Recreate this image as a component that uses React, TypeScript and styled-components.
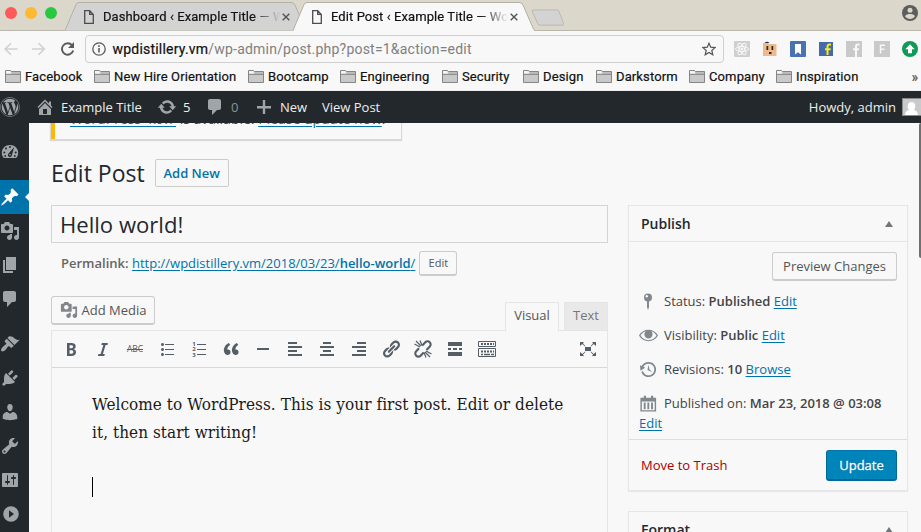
import React from "react";
import styled, { createGlobalStyle, css } from "styled-components";
import { FaWordpress } from "react-icons/fa";

const UI = `"Open Sans", "Noto Sans", sans-serif`;
const CHROME = `Roboto, "Liberation Sans", sans-serif`;
const BG = "#f8f8f8";
const INK = "#23282d";
const BLUE = "#0073aa";
const MUTED = "#a0a5aa";

const Global = createGlobalStyle`
  * { box-sizing: border-box; }
  html, body { margin: 0; padding: 0; overflow: hidden; background: ${BG}; }
  body { font-family: ${UI}; font-size: 13px; color: #444; }
  svg { display: block; flex: none; }
`;

/* ---------- icon glyph paths, 20 x 20 grid ---------- */
const P = {
  home: "M16 8.5l1.53 1.53-1.06 1.06L10 4.6l-6.47 6.49-1.06-1.06L10 2.5l4 4v-2h2v4zm-6-2.46l6 5.99V18H4v-5.97zM12 17v-5H8v5h4z",
  update: "M10.2 3.28c3.53 0 6.43 2.61 6.92 6h2.08l-3.5 4-3.5-4h2.32c-.45-1.97-2.21-3.45-4.32-3.45-1.45 0-2.73.71-3.54 1.78L4.95 5.66C6.23 4.2 8.11 3.28 10.2 3.28zm-.4 13.44c-3.52 0-6.43-2.61-6.92-6H.8l3.5-4c1.17 1.33 2.33 2.67 3.5 4H5.48c.45 1.97 2.21 3.45 4.32 3.45 1.45 0 2.73-.71 3.54-1.78l1.71 1.95c-1.28 1.46-3.15 2.38-5.25 2.38z",
  comment: "M5 2h9c1.1 0 2 .9 2 2v7c0 1.1-.9 2-2 2h-2l-5 5v-5H5c-1.1 0-2-.9-2-2V4c0-1.1.9-2 2-2z",
  plus: "M17 9v2.4h-5.8V17H8.8v-5.6H3V9h5.8V3h2.4v6H17z",
  pin: "M10.44 3.02l1.82-1.82 6.36 6.35-1.83 1.82c-1.05-.68-2.48-.57-3.41.36l-.75.75c-.92.93-1.04 2.35-.35 3.41l-1.83 1.82-2.41-2.41-2.8 2.79c-.42.42-3.38 2.71-3.8 2.29s1.86-3.39 2.28-3.81l2.79-2.79L4.1 9.36l1.83-1.82c1.05.69 2.48.57 3.4-.36l.75-.75c.93-.92 1.05-2.35.36-3.41z",
  media: "M13 11V4c0-.55-.45-1-1-1h-1.67L9 1H5L3.67 3H2c-.55 0-1 .45-1 1v7c0 .55.45 1 1 1h10c.55 0 1-.45 1-1zM7 4.5c1.38 0 2.5 1.12 2.5 2.5S8.38 9.5 7 9.5 4.5 8.38 4.5 7 5.62 4.5 7 4.5zM14 6h5v10.5c0 1.38-1.12 2.5-2.5 2.5S14 17.88 14 16.5s1.12-2.5 2.5-2.5c.17 0 .34.02.5.05V9h-3V6zm-4 8.05V13h2v3.5c0 1.38-1.12 2.5-2.5 2.5S7 17.88 7 16.5 8.12 14 9.5 14c.17 0 .34.02.5.05z",
  page: "M6 15V2h10v13H6zm-1 1h8v2H3V5h2v11z",
  brush: "M14.48 11.06L7.41 3.99l1.5-1.5c.5-.56 2.3-.47 3.51.32 1.21.8 1.43 1.28 2.91 2.1 1.18.64 2.45 1.26 4.45.85zm-.71.71L6.7 4.7 4.93 6.47c-.39.39-.39 1.02 0 1.41l1.06 1.06c.39.39.39 1.03 0 1.42-.6.6-1.43 1.11-2.21 1.69-.35.26-.7.53-1.01.84C1.43 14.23.4 16.08 1.4 17.07c.99 1 2.84-.03 4.18-1.36.31-.31.58-.66.85-1.02.57-.78 1.08-1.61 1.69-2.21.39-.39 1.02-.39 1.41 0l1.06 1.06c.39.39 1.02.39 1.41 0z",
  plug: "M13.11 4.36L9.87 7.6 8 5.73l3.24-3.24c.35-.34 1.05-.2 1.56.32.52.51.66 1.21.31 1.55zm-8 1.77l.91-1.12 9.01 9.01-1.19.84c-.71.71-2.63 1.16-3.82 1.16H6.14L4.9 17.26c-.59.59-1.54.59-2.12 0-.59-.58-.59-1.53 0-2.12l1.24-1.24v-3.88c0-1.13.4-3.19 1.09-3.89zm7.26 3.97l3.24-3.24c.34-.35 1.04-.21 1.55.31.52.51.66 1.21.31 1.55l-3.24 3.25z",
  user: "M10 9.25c-2.27 0-2.73-3.44-2.73-3.44C7 4.02 7.82 2 9.97 2c2.16 0 2.98 2.02 2.71 3.81 0 0-.41 3.44-2.68 3.44zm0 2.57L12.72 10c2.39 0 4.52 2.33 4.52 4.53v2.49s-3.65 1.13-7.24 1.13c-3.65 0-7.24-1.13-7.24-1.13v-2.49c0-2.25 1.94-4.48 4.47-4.48z",
  wrench: "M16.68 9.77c-1.34 1.34-3.3 1.67-4.95.99l-5.41 6.52c-.99.99-2.59.99-3.58 0s-.99-2.59 0-3.57l6.52-5.42c-.68-1.65-.35-3.61.99-4.95 1.28-1.28 3.12-1.62 4.72-1.06l-2.89 2.89 2.82 2.82 2.86-2.87c.53 1.58.18 3.39-1.08 4.65zM3.81 16.21c.4.39 1.04.39 1.43 0 .4-.4.4-1.04 0-1.43-.39-.4-1.03-.4-1.43 0-.39.39-.39 1.03 0 1.43z",
  settings: "M18 16V4c0-.55-.45-1-1-1H3c-.55 0-1 .45-1 1v12c0 .55.45 1 1 1h14c.55 0 1-.45 1-1zM8 11h1c.55 0 1 .45 1 1s-.45 1-1 1H8v1.5c0 .28-.22.5-.5.5s-.5-.22-.5-.5V13H6c-.55 0-1-.45-1-1s.45-1 1-1h1V5.5c0-.28.22-.5.5-.5s.5.22.5.5V11zm5-2h-1c-.55 0-1-.45-1-1s.45-1 1-1h1V5.5c0-.28.22-.5.5-.5s.5.22.5.5V7h1c.55 0 1 .45 1 1s-.45 1-1 1h-1v5.5c0 .28-.22.5-.5.5s-.5-.22-.5-.5V9z",
  collapse: "M11 2.200a7.800 7.800 0 1 0 0 15.600a7.800 7.800 0 1 0 0-15.600zM9 6.200l5 3.800-5 3.800z",
  bold: "M6 4v13h4.54c1.37 0 2.46-.33 3.26-1 .8-.66 1.2-1.58 1.2-2.77 0-.84-.17-1.51-.51-2.01s-.9-.85-1.67-1.03v-.09c.57-.1 1.02-.4 1.36-.9s.51-1.13.51-1.91c0-1.14-.39-1.98-1.17-2.5C12.75 4.26 11.5 4 9.78 4H6zm2.57 5.15V6.26h1.36c.73 0 1.27.11 1.61.32.34.22.51.58.51 1.07 0 .54-.16.92-.47 1.15s-.82.35-1.51.35h-1.5zm0 2.19h1.6c1.44 0 2.16.53 2.16 1.61 0 .6-.17 1.05-.51 1.34s-.86.43-1.57.43H8.57v-3.38z",
  italic: "M14.78 4h-5.900l-.55 2h2l-2.700 9H5.500l-.6 2h6.400l.55-2H9.900l2.700-9h2z",
  ul: "M5.5 7C4.67 7 4 6.33 4 5.5 4 4.68 4.67 4 5.5 4 6.32 4 7 4.68 7 5.5 7 6.33 6.32 7 5.5 7zM8 5h9v1H8V5zm-2.500 7c-.83 0-1.500-.67-1.500-1.500C4 9.680 4.670 9 5.500 9c.82 0 1.500.68 1.500 1.500 0 .83-.68 1.500-1.500 1.500zM8 10h9v1H8v-1zm-2.500 7c-.83 0-1.500-.67-1.500-1.500 0-.82.67-1.500 1.500-1.500.82 0 1.500.68 1.500 1.500 0 .83-.68 1.500-1.500 1.500zM8 15h9v1H8v-1z",
  quote: "M9.49 13.22c0-.74-.2-1.38-.61-1.9-.62-.78-1.83-.88-2.53-.72-.29-1.65 1.11-3.75 2.92-4.65L7.88 4c-2.73 1.3-5.42 4.28-4.96 8.05C3.21 14.43 4.59 16 6.54 16c.85 0 1.56-.25 2.12-.75s.83-1.18.83-2.03zm8.05 0c0-.74-.2-1.38-.61-1.9-.63-.78-1.83-.88-2.53-.72-.29-1.65 1.11-3.75 2.92-4.65L15.93 4c-2.73 1.3-5.41 4.28-4.95 8.05.29 2.38 1.66 3.95 3.61 3.95.85 0 1.56-.25 2.12-.75s.83-1.18.83-2.03z",
  hr: "M4 9h12v2H4z",
  left: "M3 3h9v2H3zM3 7h14v2H3zM3 11h9v2H3zM3 15h14v2H3z",
  center: "M6 3h8v2H6zM3 7h14v2H3zM6 11h8v2H6zM3 15h14v2H3z",
  right: "M8 3h9v2H8zM3 7h14v2H3zM8 11h9v2H8zM3 15h14v2H3z",
  link: "M17.74 2.76c1.68 1.69 1.68 4.41 0 6.1l-1.53 1.52c-1.12 1.12-2.7 1.47-4.14 1.09l2.62-2.61.76-.77.76-.76c.84-.84.84-2.2 0-3.04-.84-.85-2.2-.85-3.04 0l-.77.76-3.38 3.38c-.37-1.44-.02-3.02 1.1-4.14l1.52-1.53c1.69-1.68 4.42-1.68 6.1 0zM8.59 13.43l5.34-5.34c.42-.42.42-1.1 0-1.52-.44-.43-1.13-.39-1.53 0l-5.33 5.34c-.42.42-.42 1.1 0 1.52.44.43 1.13.39 1.52 0zm-.76 2.29l4.14-4.15c.38 1.44.03 3.02-1.09 4.14l-1.52 1.53c-1.69 1.68-4.41 1.68-6.1 0-1.68-1.68-1.68-4.42 0-6.1l1.53-1.52c1.12-1.12 2.7-1.47 4.14-1.1l-4.14 4.15c-.85.84-.85 2.2 0 3.05.84.84 2.2.84 3.04 0z",
  more: "M3 3h14v4H3zM3 9h3v2H3zM8 9h4v2H8zM14 9h3v2h-3zM3 13h14v4H3z",
  fullscreen: "M7 8h6v4H7zM2 3h4L4.900 4.300 7.400 7 7 7.400 4.300 4.900 2 7zM18 3h-4l1.100 1.300L12.600 7l.4.4 2.700-2.500L18 7zM2 17h4l-1.100-1.300L7.400 13l-.4-.4-2.700 2.500L2 13zM18 17h-4l1.100-1.300-2.500-2.700.4-.4 2.700 2.500L18 13z",
  eye: "M19.7 9.4C17.7 6 14 3.9 10 3.9S2.3 6 .3 9.4L0 10l.3.6c2 3.4 5.7 5.5 9.7 5.5s7.7-2.1 9.7-5.5l.3-.6-.3-.6zM10 14.9c-3.3 0-6.6-1.8-8.4-4.9C3 7.6 5 6.2 7 5.6 6.2 6.5 5.7 7.6 5.7 9c0 2.3 1.9 4.2 4.300 4.200s4.300-1.900 4.300-4.200c0-1.400-.5-2.500-1.300-3.400 2 .6 4 2 5.400 4.400-1.800 3.100-5.100 4.900-8.400 4.900z",
  backup: "M13.65 2.88c3.93 2.01 5.48 6.84 3.47 10.77s-6.83 5.48-10.77 3.47c-1.87-.96-3.2-2.56-3.86-4.4l1.64-1.03c.45 1.57 1.52 2.95 3.08 3.76 3.01 1.54 6.69.35 8.23-2.66 1.55-3.01.36-6.69-2.65-8.24C9.78 3.01 6.1 4.2 4.56 7.21l1.88.97-4.95 3.08-.39-5.82 1.78.91C4.9 2.4 9.75.89 13.65 2.88zm-4.36 7.83C9.11 10.53 9 10.28 9 10c0-.07.03-.12.04-.19h-.01L10 5l.97 4.81L14 13l-4.5-2.12.02-.02c-.08-.04-.16-.09-.23-.15z",
  calendar: "M15 4h3v14.500H1.500V4H5V3c0-.83.67-1.500 1.200-1.500S7.400 2.170 7.400 3v1h5.200V3c0-.83.67-1.500 1.200-1.500S15 2.170 15 3zM16.500 17V8H3v9zM7 9v7H5V9zM10.800 9v7h-2V9zM14.700 9v7h-2V9z",
};

const Glyph = ({ d, size = 20, color = MUTED }: { d: string; size?: number; color?: string }) => (
  <svg width={size} height={size} viewBox="0 0 20 20" fill={color} fillRule="evenodd">
    <path d={d} />
  </svg>
);

/* ---------- browser frame ---------- */
const Window = styled.div`
  width: 921px;
  height: 532px;
  overflow: hidden;
  display: flex;
  flex-direction: column;
  background: ${BG};
`;
const TabStrip = styled.div`
  height: 31px;
  flex: none;
  display: flex;
  align-items: flex-end;
  padding-right: 3px;
  background: #dbd7ca;
  box-shadow: inset 0 -1px #b9b6ab;
  font-family: ${CHROME};
`;
const Lights = styled.div`
  display: flex;
  gap: 8px;
  width: 65px;
  height: 31px;
  padding: 7px 0 0 5px;
`;
const Light = styled.i<{ $c: string }>`
  width: 12px;
  height: 12px;
  border-radius: 50%;
  background: ${(p) => p.$c};
`;
const Tab = styled.div`
  position: relative;
  width: 242px;
  height: 29px;
  margin-right: -14px;
  display: flex;
  align-items: center;
  padding: 0 12px 0 19px;
`;
const TabShape = styled.svg`
  position: absolute;
  inset: 0;
`;
const TabIcon = styled.svg`
  position: relative;
`;
const TabTitle = styled.span`
  position: relative;
  margin-left: 9px;
  width: 179px;
  overflow: hidden;
  white-space: nowrap;
  font-size: 13px;
  letter-spacing: 0.08px;
  color: #111;
  -webkit-text-stroke: 0.2px;
  mask-image: linear-gradient(90deg, #000 150px, transparent 177px);
`;
const NewTab = styled.svg`
  align-self: flex-start;
  margin: 9px 0 0 10px;
`;
const Profile = styled.svg`
  margin: 5px 0 0 auto;
  align-self: flex-start;
`;
const Toolbar = styled.div`
  height: 36px;
  flex: none;
  display: flex;
  align-items: center;
  padding: 0 3px 0 4px;
  font-family: ${CHROME};
`;
const NavButtons = styled.div`
  display: flex;
  width: 81px;
  gap: 13px;
`;
const Omnibox = styled.div`
  width: 639px;
  height: 28px;
  display: flex;
  align-items: center;
  padding: 0 7px 0 6px;
  border: 1px solid #cfcfcf;
  border-radius: 4px;
`;
const Url = styled.span`
  flex: 1;
  margin-left: 6.5px;
  font-size: 14px;
  letter-spacing: 0.21px;
  color: #808080;
  b {
    font-weight: 400;
    color: #111;
    -webkit-text-stroke: 0.2px;
  }
`;
const Extensions = styled.div`
  display: flex;
  align-items: center;
  justify-content: space-between;
  width: 184px;
  margin-left: auto;
`;
const Bookmarks = styled.div`
  height: 24px;
  flex: none;
  display: flex;
  align-items: center;
  padding: 0 3px 4px 5px;
  border-bottom: 1px solid #ececec;
  font-family: ${CHROME};
  font-size: 13px;
  color: #111;
  -webkit-text-stroke: 0.2px;
`;
const Bookmark = styled.div<{ $w: number }>`
  width: ${(p) => p.$w}px;
  flex: none;
  display: flex;
  align-items: center;
  gap: 4px;
  letter-spacing: 0.12px;
  white-space: nowrap;
`;
const Chevrons = styled.span`
  margin-left: auto;
  font-size: 14px;
  color: #555;
`;

const FileIcon = () => (
  <TabIcon width="10" height="14" viewBox="0 0 10 14" fill="none" stroke="#4c4c4c" strokeWidth="1.3">
    <path d="M.7.7h5l3.600 3.700v8.900H.7zM5.700.7v3.700h3.600" />
  </TabIcon>
);
const CloseIcon = () => (
  <TabIcon width="8" height="8" viewBox="0 0 8 8" stroke="#555" strokeWidth="1.4">
    <path d="M.7.7l6.600 6.600M7.300.7L.7 7.300" />
  </TabIcon>
);
const FolderIcon = () => (
  <svg width="16" height="13" viewBox="0 0 16 13">
    <path d="M.5 12.500V.5h5l1 1h9v11z" fill="#c9c9c9" stroke="#858585" />
    <path d="M1 4.500h14" stroke="#8f8f8f" />
    <path d="M1 3.500v-2.500h4l1.500 2.500z" fill="#f4f4f4" />
    <path d="M7 2.500h8v1.500H6z" fill="#b4b4b4" />
  </svg>
);

const bookmarks: [string, number][] = [
  ["Facebook", 89], ["New Hire Orientation", 154], ["Bootcamp", 92], ["Engineering", 102], ["Security", 81],
  ["Design", 73], ["Darkstorm", 93], ["Company", 87], ["Inspiration", 90],
];

const BrowserTab = ({ title, active }: { title: string; active?: boolean }) => (
  <Tab>
    <TabShape width="242" height="29" viewBox="0 0 242 29">
      <path
        d="M0 28.500L10.800 3Q12 .5 14 .5H226Q229 .5 230 3L240 26Q241 28.500 242 28.500"
        fill={active ? BG : "#d3d3d3"}
        stroke="#b3b0a8"
      />
      {active && <path d="M1 28.500h240" stroke={BG} />}
    </TabShape>
    <FileIcon />
    <TabTitle>{title}</TabTitle>
    <CloseIcon />
  </Tab>
);

const BrowserChrome = () => (
  <>
    <TabStrip>
      <Lights>
        <Light $c="#fc5b57" />
        <Light $c="#fdb92f" />
        <Light $c="#28c840" />
      </Lights>
      <BrowserTab title="Dashboard ‹ Example Title — WordPress" />
      <BrowserTab title="Edit Post ‹ Example Title — WordPress" active />
      <NewTab width="34" height="18" viewBox="0 0 34 18">
        <path d="M2 1h24q1.500 0 2 1.500l4.500 12q.6 1.700-1 1.700H9q-1.500 0-2.200-1.500L1.500 3Q.7 1 2 1z" fill="#d3d3d3" stroke="#bbb8ae" />
      </NewTab>
      <Profile width="16" height="16" viewBox="0 0 16 16">
        <circle cx="8" cy="8" r="8" fill="#5d5d5d" />
        <circle cx="8" cy="5.300" r="2.500" fill="#dbd7ca" />
        <path d="M3 11.300C4 9.300 6 9 8 9s4 .3 5 2.300a6 6 0 0 1-10 0z" fill="#dbd7ca" />
      </Profile>
    </TabStrip>
    <Toolbar>
      <NavButtons>
        <svg width="14" height="14" viewBox="0 0 14 14" fill="none" stroke="#d0d0d0" strokeWidth="1.600">
          <path d="M13.500 7H1.500M7 1.200L1.200 7 7 12.800" />
        </svg>
        <svg width="16" height="14" viewBox="0 0 16 14" fill="none" stroke="#d0d0d0" strokeWidth="1.600">
          <path d="M1 7h12M7.500 1.200L13.300 7l-5.800 5.800" />
        </svg>
        <svg width="16" height="14" viewBox="0 0 16 14" fill="none" stroke="#5a5a5a" strokeWidth="1.900">
          <path d="M13.200 8.500A5.700 5.700 0 1 1 12 3.200" />
          <path d="M14 0v6H8z" fill="#5a5a5a" stroke="none" />
        </svg>
      </NavButtons>
      <Omnibox>
        <svg width="14" height="14" viewBox="0 0 14 14">
          <circle cx="7" cy="7" r="6.200" fill="none" stroke="#5a5a5a" strokeWidth="1.300" />
          <path d="M6.200 6h1.600v4.500H6.200zM6.200 3.300h1.600v1.600H6.200z" fill="#5a5a5a" />
        </svg>
        <Url>
          <b>wpdistillery.vm</b>/wp-admin/post.php?post=1&amp;action=edit
        </Url>
        <svg width="14" height="14" viewBox="0 0 14 14" fill="none" stroke="#555" strokeWidth="1.200">
          <path d="M7 1.200l1.700 4 4.400.4-3.300 2.900 1 4.300L7 10.500l-3.800 2.300 1-4.300L.9 5.600l4.400-.4z" />
        </svg>
      </Omnibox>
      <Extensions>
        <svg width="16" height="16" viewBox="0 0 16 16">
          <rect width="16" height="16" rx="1" fill="#cfcfcf" />
          <g fill="none" stroke="#f8f8f8">
            <ellipse cx="8" cy="8" rx="6.500" ry="2.500" />
            <ellipse cx="8" cy="8" rx="6.500" ry="2.500" transform="rotate(60 8 8)" />
            <ellipse cx="8" cy="8" rx="6.500" ry="2.500" transform="rotate(120 8 8)" />
          </g>
          <circle cx="8" cy="8" r="1.300" fill="#f8f8f8" />
        </svg>
        <svg width="16" height="16" viewBox="0 0 16 16">
          <path d="M1 2h5l1 1h7.500v12H1z" fill="#edbb8b" />
          <path d="M2.500 2q2.500-2.500 5 0z" fill="#1d3057" />
          <path d="M4.500 5h1.700v4H4.500zM9.500 5h1.700v4H9.500zM7 11h2.500v2H7z" fill="#33261d" />
        </svg>
        <svg width="16" height="16" viewBox="0 0 16 16">
          <rect width="16" height="16" rx="1" fill="#4b72b0" />
          <path d="M5 3h6v10.500l-3-2.300-3 2.300z" fill="#fff" />
        </svg>
        <svg width="16" height="16" viewBox="0 0 16 16">
          <rect x="1" y="1" width="14" height="14" fill="#4569ad" />
          <path d="M13 3.500h-1.300c-1.700 0-2.200.9-2.200 2.200V14M7 8.200h5.700" fill="none" stroke="#f7ec20" strokeWidth="2" />
        </svg>
        <svg width="16" height="16" viewBox="0 0 16 16">
          <rect width="16" height="16" fill="#c9c9c9" />
          <path d="M13.500 3.500h-1.300C10.500 3.500 10 4.400 10 5.700V16M7 8.300h6" fill="none" stroke="#f8f8f8" strokeWidth="2.100" />
        </svg>
        <svg width="16" height="16" viewBox="0 0 16 16">
          <rect width="16" height="16" fill="#c9c9c9" />
          <path d="M11 4.200H6.500V12.500M6.500 8.200h4" fill="none" stroke="#f8f8f8" strokeWidth="1.500" />
        </svg>
        <svg width="16" height="16" viewBox="0 0 16 16">
          <circle cx="8" cy="8" r="8" fill="#0f9a58" />
          <path d="M8 3.300l4.700 4.900H10v4H6v-4H3.300z" fill="#fff" />
        </svg>
      </Extensions>
    </Toolbar>
    <Bookmarks>
      {bookmarks.map(([label, w]) => (
        <Bookmark key={label} $w={w}>
          <FolderIcon />
          {label}
        </Bookmark>
      ))}
      <Chevrons>»</Chevrons>
    </Bookmarks>
  </>
);

/* ---------- admin bar and menu ---------- */
const AdminBar = styled.div`
  height: 32px;
  flex: none;
  position: relative;
  z-index: 2;
  display: flex;
  align-items: center;
  background: ${INK};
  color: #eee;
  font-size: 13px;
`;
const BarItem = styled.div<{ $w?: number; $dim?: boolean }>`
  display: flex;
  align-items: center;
  flex: none;
  ${(p) => p.$w && css`width: ${p.$w}px;`}
  gap: 6px;
  ${(p) => p.$dim && css`color: #8d9196;`}
`;
const Howdy = styled.div`
  margin-left: auto;
  display: flex;
  align-items: center;
  gap: 6px;
`;
const Body = styled.div`
  flex: 1;
  min-height: 0;
  display: flex;
`;
const Menu = styled.nav`
  width: 29px;
  flex: none;
  padding-top: 12px;
  background: ${INK};
`;
const MenuItem = styled.div<{ $active?: boolean; $before?: number }>`
  position: relative;
  height: 34px;
  display: flex;
  align-items: center;
  margin-top: ${(p) => p.$before ?? 0}px;
  ${(p) =>
    p.$active &&
    css`
      background: ${BLUE};
      &::after {
        content: "";
        position: absolute;
        right: 0;
        top: 13px;
        border: 4px solid transparent;
        border-left: 0;
        border-right-color: ${BG};
      }
    `}
`;

/* ---------- page ---------- */
const Page = styled.main`
  flex: 1;
  min-width: 0;
  overflow: hidden;
  padding-left: 22px;
`;
const Notice = styled.div`
  width: 350px;
  height: 16px;
  display: flex;
  align-items: flex-start;
  padding-left: 15px;
  border-left: 4px solid #ffb900;
  box-shadow: 0 1px 1px 1px rgba(0, 0, 0, 0.13);
`;
const NoticeText = styled.span`
  margin-top: -14px;
  font-size: 14px;
  line-height: 19px;
  white-space: nowrap;
`;
const Link = styled.a`
  color: ${BLUE};
  text-decoration: underline;
  text-underline-offset: 2px;
`;
const TitleRow = styled.div`
  height: 28px;
  margin-top: 20px;
  display: flex;
  align-items: center;
  gap: 10px;
`;
const H1 = styled.h1`
  margin: 0;
  font-size: 23px;
  font-weight: 400;
  line-height: 28px;
  color: ${INK};
`;
const AddNew = styled.button`
  width: 74px;
  height: 28px;
  padding: 0;
  border: 1px solid #ccc;
  border-radius: 2px;
  background: ${BG};
  font: 600 13px/26px ${UI};
  color: ${BLUE};
`;
const Button = styled.button<{ $w: number; $h: number; $size?: number; $primary?: boolean }>`
  width: ${(p) => p.$w}px;
  height: ${(p) => p.$h}px;
  flex: none;
  padding: 0;
  display: flex;
  align-items: center;
  justify-content: center;
  gap: 4px;
  border: 1px solid #ccc;
  border-bottom-width: 2px;
  border-radius: 3px;
  background: ${BG};
  color: #555;
  font-family: ${UI};
  font-size: ${(p) => p.$size ?? 13}px;
  ${(p) =>
    p.$primary &&
    css`
      background: #0085ba;
      border-color: #0073aa #006799 #006799;
      color: #fff;
      text-shadow: 0 -1px 1px #006799, 0 0 1px #006799;
      -webkit-text-stroke: 0.3px;
    `}
`;
const Columns = styled.div`
  display: flex;
  gap: 20px;
  margin-top: 18px;
`;
const Left = styled.section`
  width: 557px;
`;
const TitleInput = styled.div`
  height: 38px;
  padding-left: 8px;
  border: 1px solid #d4d4d4;
  font-size: 22.1px;
  line-height: 37px;
  color: ${INK};
`;
const Permalink = styled.div`
  height: 24px;
  margin-top: 8px;
  padding-left: 10px;
  display: flex;
  align-items: center;
  white-space: pre;
  color: #666;
  b { font-weight: 600; }
  button { margin-left: 4px; }
`;
const EditorHead = styled.div`
  height: 35px;
  margin-top: 21px;
  display: flex;
`;
const EditorTab = styled.div<{ $active?: boolean }>`
  width: ${(p) => (p.$active ? 54 : 44)}px;
  height: ${(p) => (p.$active ? 29 : 28)}px;
  margin-top: 7px;
  border: 1px solid #e5e5e5;
  border-bottom: 0;
  line-height: 25px;
  text-align: center;
  font-size: 13px;
  background: ${(p) => (p.$active ? BG : "#e9e9e9")};
  color: ${(p) => (p.$active ? "#555" : "#777")};
  position: relative;
  z-index: 1;
`;
const Tabs = styled.div`
  margin-left: auto;
  margin-top: -1px;
  display: flex;
  gap: 5px;
`;
const Editor = styled.div`
  height: 260px;
  border: 1px solid #e5e5e5;
  margin-top: -1px;
`;
const EditorBar = styled.div`
  height: 37px;
  display: flex;
  align-items: center;
  gap: 12px;
  padding: 0 9px;
  border-bottom: 1px solid #d8d8d8;
`;
const Spacer = styled.i`
  flex: 1;
`;
const Prose = styled.div`
  padding: 22px 40px;
  font-family: "DejaVu Serif Condensed", "DejaVu Serif", serif;
  font-size: 17px;
  font-stretch: condensed;
  letter-spacing: 0.05px;
  line-height: 28px;
  color: #1a1a1a;
  white-space: pre;
`;
const Caret = styled.div`
  width: 1px;
  height: 20px;
  margin-top: 31px;
  background: #000;
`;
const Right = styled.aside`
  width: 280px;
`;
const Box = styled.div`
  border: 1px solid #e5e5e5;
  box-shadow: 0 1px 1px rgba(0, 0, 0, 0.06);
  margin-bottom: 20px;
`;
const BoxHead = styled.div`
  height: 36px;
  display: flex;
  align-items: center;
  justify-content: space-between;
  padding: 0 14px 0 12px;
  border-bottom: 1px solid #e5e5e5;
  font-size: 14px;
  font-weight: 600;
  color: ${INK};
`;
const BoxBody = styled.div`
  height: 197px;
  padding: 10px 10px 0 10px;
`;
const PreviewRow = styled.div`
  display: flex;
  justify-content: flex-end;
  margin-bottom: 3px;
`;
const Row = styled.div`
  height: 34px;
  display: flex;
  align-items: center;
  white-space: pre;
  color: #444;
  b { font-weight: 600; }
  svg { margin-right: 6px; }
`;
const WrapLink = styled.div`
  line-height: 18px;
  margin-top: -6px;
`;
const Actions = styled.div`
  height: 51px;
  display: flex;
  align-items: center;
  justify-content: space-between;
  padding: 0 10px 0 12px;
  border-top: 1px solid #ddd;
`;
const Trash = styled.span`
  color: #a00;
`;
const Scrollbar = styled.div`
  width: 2px;
  height: 135px;
  flex: none;
  border-radius: 2px 0 0 2px;
  background: #707070;
`;

const menu = [P.media, P.page, P.comment];
const menuLower = [P.plug, P.user, P.wrench, P.settings, P.collapse];
const SLATE = "#555d66";
const GREY = "#82878c";

const Toggle = () => (
  <svg width="8" height="6" viewBox="0 0 8 6"><path d="M4 0l4 6H0z" fill="#72777c" /></svg>
);

export default function App() {
  return (
    <Window>
      <Global />
      <BrowserChrome />
      <AdminBar>
        <BarItem $w={35}><FaWordpress size={20} color={MUTED} /></BarItem>
        <BarItem $w={122}><Glyph d={P.home} />Example Title</BarItem>
        <BarItem $w={48}><Glyph d={P.update} />5</BarItem>
        <BarItem $w={49} $dim><Glyph d={P.comment} />0</BarItem>
        <BarItem $w={68}><Glyph d={P.plus} />New</BarItem>
        <BarItem>View Post</BarItem>
        <Howdy>
          Howdy, admin
          <svg width="19" height="18" viewBox="0 0 19 18">
            <rect width="19" height="18" fill="#8a8a8a" />
            <rect x="1" y="1" width="18" height="16" fill="#cacaca" />
            <path d="M3 17c0-3 2-4.500 4-5-2.500-3-1.500-8 2.500-8s5 5 2.500 8c2 .5 4 2 4 5z" fill="#fff" />
          </svg>
        </Howdy>
      </AdminBar>
      <Body>
        <Menu>
          <MenuItem>
            <svg width="20" height="20" viewBox="0 0 20 20">
              <path d="M3.800 16h12.400c1.300-1.600 2-3 2-5C18.200 6.300 14.600 3 10 3s-8.200 3.300-8.200 8c0 2 .7 3.400 2 5z" fill={MUTED} />
              <g fill={INK}>
                <circle cx="10" cy="5" r="1" /><circle cx="6" cy="6.500" r="1" /><circle cx="4.300" cy="10.500" r="1" />
                <circle cx="15.700" cy="10.500" r="1" /><circle cx="5.200" cy="14" r=".9" /><circle cx="14.800" cy="14" r=".9" />
                <path d="M14.200 5l-2.300 8a2 2 0 1 1-3-1.800z" />
              </g>
              <circle cx="10" cy="12.800" r=".8" fill={MUTED} />
            </svg>
          </MenuItem>
          <MenuItem $active $before={11}><Glyph d={P.pin} color="#fff" /></MenuItem>
          {menu.map((d, i) => <MenuItem key={i}><Glyph d={d} /></MenuItem>)}
          <MenuItem $before={11}><Glyph d={P.brush} /></MenuItem>
          {menuLower.map((d, i) => <MenuItem key={i}><Glyph d={d} /></MenuItem>)}
        </Menu>
        <Page>
          <Notice>
            <NoticeText><Link>WordPress 4.9.7</Link> is available. <Link>Please update now</Link>.</NoticeText>
          </Notice>
          <TitleRow>
            <H1>Edit Post</H1>
            <AddNew>Add New</AddNew>
          </TitleRow>
          <Columns>
            <Left>
              <TitleInput>Hello world!</TitleInput>
              <Permalink>
                <b>Permalink: </b>
                <Link>http://wpdistillery.vm/2018/03/23/<b>hello-world</b>/</Link>
                <Button $w={38} $h={25} $size={11}>Edit</Button>
              </Permalink>
              <EditorHead>
                <Button $w={104} $h={29}><Glyph d={P.media} size={18} color={GREY} />Add Media</Button>
                <Tabs>
                  <EditorTab $active>Visual</EditorTab>
                  <EditorTab>Text</EditorTab>
                </Tabs>
              </EditorHead>
              <Editor>
                <EditorBar>
                  <Glyph d={P.bold} color={SLATE} />
                  <Glyph d={P.italic} color={SLATE} />
                  <svg width="20" height="20" viewBox="0 0 20 20">
                    <text x="2" y="13.300" textLength="16" fontFamily={UI} fontSize="8.500" fill={SLATE}>ABC</text>
                    <path d="M2 10.500h16" stroke={SLATE} />
                  </svg>
                  <Glyph d={P.ul} color={SLATE} />
                  <svg width="20" height="20" viewBox="0 0 20 20" fill={SLATE}>
                    <path d="M8 5h9v1H8zM8 10h9v1H8zM8 15h9v1H8z" />
                    <g fontFamily={UI} fontSize="6" fontWeight="700">
                      <text x="3.200" y="7">1</text><text x="3.200" y="12.300">2</text><text x="3.200" y="17.600">3</text>
                    </g>
                  </svg>
                  <Glyph d={P.quote} color={SLATE} />
                  <Glyph d={P.hr} color={SLATE} />
                  <Glyph d={P.left} color={SLATE} />
                  <Glyph d={P.center} color={SLATE} />
                  <Glyph d={P.right} color={SLATE} />
                  <Glyph d={P.link} color={SLATE} />
                  <svg width="20" height="20" viewBox="0 0 20 20" fill="none" stroke={SLATE} strokeWidth="2.100">
                    <path d="M9.300 6.500l3-3.200a3 3 0 0 1 4.500 4.300L13.500 11M6 9.300L3.200 12.300a3 3 0 0 0 4.400 4.400L10.700 13.500" />
                    <path d="M1.500 5l5.500 3M3 2l5 5M7 1.500l2 5M18.500 15L13 12M17 18l-5-5M13 18.500l-2-5" strokeWidth="1.200" />
                  </svg>
                  <Glyph d={P.more} color={SLATE} />
                  <svg width="20" height="20" viewBox="0 0 20 20" fill="none" stroke={SLATE}>
                    <path d="M1.500 2.500h17v5h-17zM1.500 9.500h17v8h-17z" />
                    <path d="M4 5h13M4 12.500h13" strokeDasharray="2 1" strokeWidth="2" />
                    <path d="M4 15.500h2M7 15.500h6M14 15.500h3" strokeWidth="1.500" />
                  </svg>
                  <Spacer />
                  <Glyph d={P.fullscreen} color={SLATE} />
                </EditorBar>
                <Prose>
                  {"Welcome to WordPress. This is your first post. Edit or delete\nit, then start writing!"}
                  <Caret />
                </Prose>
              </Editor>
            </Left>
            <Right>
              <Box>
                <BoxHead>Publish<Toggle /></BoxHead>
                <BoxBody>
                  <PreviewRow><Button $w={125} $h={29}>Preview Changes</Button></PreviewRow>
                  <Row>
                    <svg width="19" height="20" viewBox="0 0 19 20" fill={GREY}>
                      <circle cx="9" cy="6.500" r="4" /><path d="M8 10h2v6l-1 3-1-3z" />
                      <circle cx="7.800" cy="5.300" r="1.200" fill={BG} />
                    </svg>
                    Status: <b>Published </b><Link>Edit</Link>
                  </Row>
                  <Row><Glyph d={P.eye} size={19} color={GREY} />Visibility: <b>Public </b><Link>Edit</Link></Row>
                  <Row><Glyph d={P.backup} size={19} color={GREY} />Revisions: <b>10 </b><Link>Browse</Link></Row>
                  <Row><Glyph d={P.calendar} size={19} color={GREY} />Published on: <b>Mar 23, 2018 @ 03:08</b></Row>
                  <WrapLink><Link>Edit</Link></WrapLink>
                </BoxBody>
                <Actions>
                  <Trash>Move to Trash</Trash>
                  <Button $w={71} $h={31} $primary>Update</Button>
                </Actions>
              </Box>
              <Box>
                <BoxHead>Format<Toggle /></BoxHead>
              </Box>
            </Right>
          </Columns>
        </Page>
        <Scrollbar />
      </Body>
    </Window>
  );
}
